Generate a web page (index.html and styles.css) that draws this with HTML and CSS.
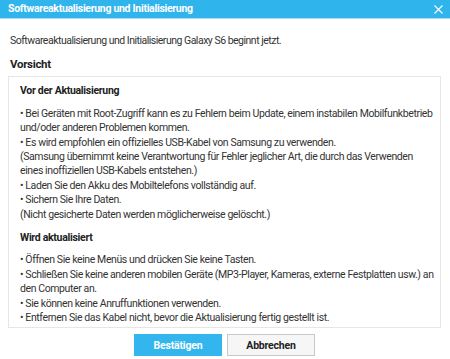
FILE: index.html
```html
<!DOCTYPE html>
<html lang="de">
  <head>
    <meta charset="UTF-8" />
    <meta name="viewport" content="width=device-width, initial-scale=1.0" />
    <title>Softwareaktualisierung und Initialisierung</title>
    <link rel="stylesheet" href="styles.css">
  </head>
  <body>
    <div class="dialog">
      <!-- Title bar -->
      <div class="title-bar">
        <span class="title">Softwareaktualisierung und Initialisierung</span>
        <span class="close">
          <svg width="9" height="9" viewBox="0 0 9 9">
            <path d="M0.5 0.5 L8.5 8.5 M8.5 0.5 L0.5 8.5" stroke="#fff" stroke-width="1.1" fill="none" />
          </svg>
        </span>
      </div>

      <div class="content">
        <p class="intro">Softwareaktualisierung und Initialisierung Galaxy S6 beginnt jetzt.</p>
        <h2>Vorsicht</h2>

        <div class="notice">
          <div class="section">
            <h3>Vor der Aktualisierung</h3>
            <p>• Bei Geräten mit Root-Zugriff kann es zu Fehlern beim Update, einem instabilen Mobilfunkbetrieb<br>und/oder anderen Problemen kommen.</p>
            <p>• Es wird empfohlen ein offizielles USB-Kabel von Samsung zu verwenden.</p>
            <p>(Samsung übernimmt keine Verantwortung für Fehler jeglicher Art, die durch das Verwenden<br>eines inoffiziellen USB-Kabels entstehen.)</p>
            <p>• Laden Sie den Akku des Mobiltelefons vollständig auf.</p>
            <p>• Sichern Sie Ihre Daten.</p>
            <p>(Nicht gesicherte Daten werden möglicherweise gelöscht.)</p>
          </div>

          <div class="section">
            <h3>Wird aktualisiert</h3>
            <p>• Öffnen Sie keine Menüs und drücken Sie keine Tasten.</p>
            <p>• Schließen Sie keine anderen mobilen Geräte (MP3-Player, Kameras, externe Festplatten usw.) an<br>den Computer an.</p>
            <p>• Sie können keine Anruffunktionen verwenden.</p>
            <p>• Entfernen Sie das Kabel nicht, bevor die Aktualisierung fertig gestellt ist.</p>
          </div>
        </div>

        <div class="buttons">
          <button class="btn btn-primary">Bestätigen</button>
          <button class="btn btn-default">Abbrechen</button>
        </div>
      </div>
    </div>
  </body>
</html>
```

FILE: styles.css
```css
* {
  box-sizing: border-box;
  margin: 0;
  padding: 0;
}

body {
  font-family: Roboto, "Liberation Sans", sans-serif;
  font-size: 10.5px;
  letter-spacing: -0.4px;
  color: #333;
  background-color: #fff;
}

.dialog {
  width: 450px;
  height: 359px;
  background-color: #fff;
}

.title-bar {
  height: 19px;
  padding: 0 7px 0 8px;
  display: flex;
  align-items: center;
  justify-content: space-between;
  background-color: #30b4ec;
  border-bottom: 1px solid #a8ddf5;
}

.title {
  color: #fff;
  font-weight: bold;
  letter-spacing: -0.3px;
  line-height: 18px;
}

.close {
  display: flex;
  align-items: center;
}

.content {
  padding: 0 9px 0 8px;
}

.intro {
  margin-top: 15px;
  padding-left: 2px;
  line-height: 14.4px;
  letter-spacing: -0.5px;
  white-space: nowrap;
}

h2 {
  margin-top: 8.5px;
  padding-left: 2px;
  font-size: 11.5px;
  letter-spacing: -0.3px;
  line-height: 14.4px;
  color: #222;
}

.notice {
  margin-top: 5px;
  height: 252px;
  padding: 7px 8px 0 11px;
  border: 1px solid #e6e6e6;
  white-space: nowrap;
}

.section + .section {
  margin-top: 9px;
}

h3 {
  font-size: 10.5px;
  letter-spacing: -0.3px;
  line-height: 14.4px;
  color: #222;
  margin-bottom: 8px;
}

.section p {
  line-height: 14.4px;
}

.buttons {
  margin-top: 6px;
  display: flex;
  justify-content: center;
  gap: 5px;
}

.btn {
  width: 88px;
  height: 22px;
  font-family: inherit;
  font-size: 10.5px;
  font-weight: bold;
  letter-spacing: -0.2px;
  cursor: pointer;
}

.btn-primary {
  background-color: #33b5ee;
  color: #fff;
  border: 1px solid #33b5ee;
}

.btn-default {
  background-color: #f6f6f6;
  color: #222;
  border: 1px solid #c8c8c8;
}
```
